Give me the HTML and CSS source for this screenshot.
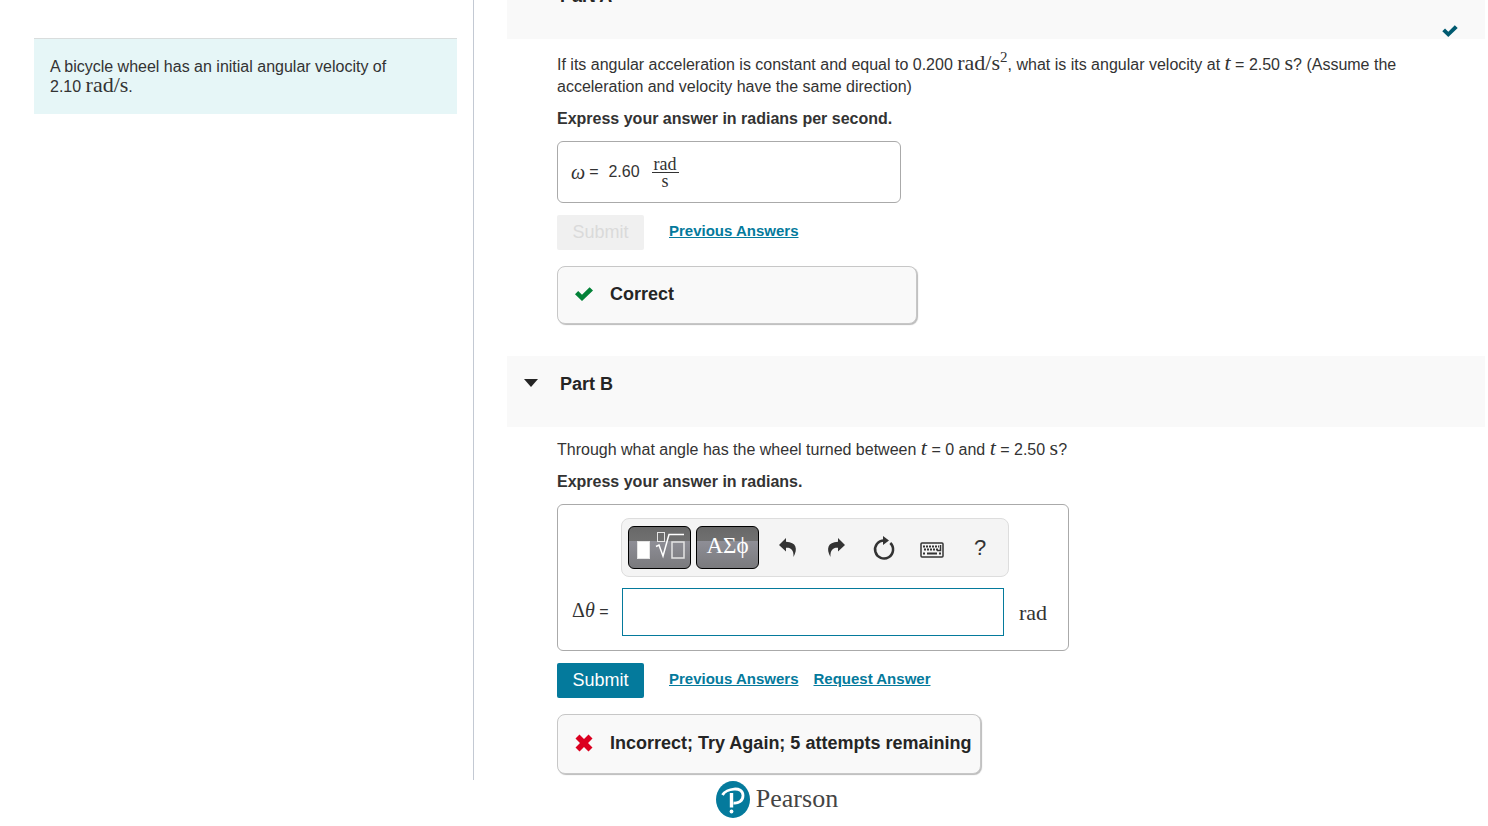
FILE: index.html
```html
<!DOCTYPE html>
<html lang="en">
<head>
    <meta charset="UTF-8">
    <meta name="viewport" content="width=device-width, initial-scale=1.0">
    <title>Angular velocity</title>
    <link rel="stylesheet" href="styles.css">
</head>
<body>
    <div class="columns">
        <aside class="intro">
            <p class="intro-text">A bicycle wheel has an initial angular velocity of 2.10&nbsp;<span class="math">rad/s</span>.</p>
        </aside>

        <main class="parts">
            <section class="part">
                <header class="part-header part-header-first">
                    <h2>Part A</h2>
                    <svg class="done" viewBox="0 0 18 14"><path d="M3.2 4 L7 7.8 L14.6 .3 L18 3.600 L7 14 L0 7.200 Z"/></svg>
                </header>
                <div class="part-body">
                    <p>If its angular acceleration is constant and equal to 0.200 <span class="math">rad/s<sup>2</sup></span>, what is its angular velocity at <i class="math">t</i> = 2.50 <span class="math">s</span>? (Assume the acceleration and velocity have the same direction)</p>
                    <p class="instructions">Express your answer in radians per second.</p>
                    <div class="answer answer-done">
                        <i class="math">ω</i>
                        <span>=</span>
                        <span class="value">2.60</span>
                        <span class="fraction"><span>rad</span><span>s</span></span>
                    </div>
                    <div class="actions">
                        <button class="submit" disabled>Submit</button>
                        <a href="#">Previous Answers</a>
                    </div>
                    <div class="feedback feedback-correct">
                        <svg class="icon-correct" viewBox="0 0 18 14"><path d="M3.2 4 L7 7.8 L14.6 .3 L18 3.600 L7 14 L0 7.200 Z"/></svg>
                        <span>Correct</span>
                    </div>
                </div>
            </section>

            <section class="part">
                <header class="part-header">
                    <svg class="caret" viewBox="0 0 14 8"><path d="M0 0 H14 L7 8 Z"/></svg>
                    <h2>Part B</h2>
                </header>
                <div class="part-body">
                    <p>Through what angle has the wheel turned between <i class="math">t</i> = 0 and <i class="math">t</i> = 2.50 <span class="math">s</span>?</p>
                    <p class="instructions">Express your answer in radians.</p>
                    <div class="answer answer-editor">
                        <div class="toolbar">
                            <button class="palette" aria-label="Templates">
                                <svg width="50" height="30" viewBox="0 0 50 30" fill="none" stroke="#e4e4e4">
                                    <rect x="2.5" y="10.5" width="12" height="17" fill="#fff"/>
                                    <rect x="22.5" y="1.5" width="7" height="9"/>
                                    <path d="M21 15.5 L24 14 L28 25 L34 3.5 H49" stroke="#fff" stroke-width="1.5"/>
                                    <rect x="37" y="11" width="12" height="16" stroke-width="1.5"/>
                                </svg>
                            </button>
                            <button class="palette" aria-label="Symbols">ΑΣϕ</button>
                            <button class="tool" aria-label="Undo">
                                <svg width="20" height="22" viewBox="0 0 20 22"><path d="M8 1 L1 8 L8 14.5 V10.8 C13 10.5 16 13 15.5 20 C20 12 18.5 5 8 4.7 Z"/></svg>
                            </button>
                            <button class="tool" aria-label="Redo">
                                <svg width="20" height="22" viewBox="0 0 20 22"><path d="M12 1 L19 8 L12 14.5 V10.8 C7 10.5 4 13 4.5 20 C0 12 1.5 5 12 4.7 Z"/></svg>
                            </button>
                            <button class="tool" aria-label="Reset">
                                <svg width="24" height="26" viewBox="0 0 24 26"><path d="M18.3 8 A9 9 0 1 1 12 5.5" fill="none" stroke="#333" stroke-width="2.5"/><path d="M11 1 L17 5.5 L11 10 Z"/></svg>
                            </button>
                            <button class="tool" aria-label="Keyboard">
                                <svg class="keyboard" width="24" height="16" viewBox="0 0 24 16" fill="none" stroke="#333">
                                    <rect x="1" y="1" width="22" height="14" rx="1" stroke-width="1.5"/>
                                    <path d="M3 4.5 H19 M4 7.5 H18" stroke-width="2" stroke-dasharray="2 1"/>
                                    <path d="M3 11.5 H5 M7 11.5 H17 M19 11.5 H21" stroke-width="2"/>
                                    <path d="M20.5 3 V8.5 H17" stroke-width="1.5"/>
                                </svg>
                            </button>
                            <button class="tool" aria-label="Help">?</button>
                        </div>
                        <div class="entry">
                            <label for="theta"><span class="math">Δ<i>θ</i></span> =</label>
                            <input type="text" id="theta">
                            <span class="math">rad</span>
                        </div>
                    </div>
                    <div class="actions">
                        <button class="submit">Submit</button>
                        <a href="#">Previous Answers</a>
                        <a href="#">Request Answer</a>
                    </div>
                    <div class="feedback feedback-incorrect">
                        <svg class="icon-incorrect" viewBox="0 0 18 18"><path d="M4.5 .5 L9 5 L13.5 .5 L17.500 4.5 L13 9 L17.500 13.5 L13.5 17.500 L9 13 L4.5 17.500 L.5 13.5 L5 9 L.5 4.5 Z"/></svg>
                        <span>Incorrect; Try Again; 5 attempts remaining</span>
                    </div>
                </div>
            </section>
        </main>
    </div>

    <footer class="footer">
        <svg class="logo" viewBox="0 0 34 37">
            <ellipse cx="17" cy="18.5" rx="17" ry="18.5" fill="#047a9c"/>
            <path d="M6.500 14 C10 7.500 27 4.500 27 14.500 C27 20.500 22 22.500 17.500 22" fill="none" stroke="#fff" stroke-width="2.8"/>
            <path d="M15.5 12 V26.5" stroke="#fff" stroke-width="3.4"/>
            <circle cx="15.5" cy="30.5" r="1.9" fill="#fff"/>
        </svg>
        <span>Pearson</span>
    </footer>
</body>
</html>
```
FILE: styles.css
```css
* {
    margin: 0;
    padding: 0;
    box-sizing: border-box;
}

body {
    height: 100vh;
    overflow: hidden;
    display: flex;
    flex-direction: column;
    background: white;
    color: #333;
    font-family: 'Liberation Sans', Arial, sans-serif;
    font-size: 16px;
    line-height: 22px;
}

button,
input {
    font: inherit;
}

.columns {
    flex: 1;
    min-height: 0;
    display: flex;
}

/* Left column */

.intro {
    flex: 0 0 474px;
    padding: 38px 16px 0 34px;
    border-right: 1px solid #c3c9d3;
}

.intro-text {
    padding: 18px 16px 17px;
    background: #e6f6f7;
    border-top: 1px solid #d9dddd;
    line-height: 20px;
}

.math {
    font-family: 'Liberation Serif', 'Times New Roman', serif;
    font-size: 22px;
    line-height: 1px;
}

.math sup {
    font-size: 15px;
    line-height: 13px;
}

/* Parts */

.parts {
    flex: 1;
    padding: 0 3px 0 33px;
}

.part-header {
    height: 71px;
    padding: 17px 17px 0;
    display: flex;
    align-items: flex-start;
    background: #f9f9f9;
    color: #252525;
}

/* the pane is scrolled past the top of the first part */
.part-header-first {
    margin-top: -32px;
    padding-left: 53px;
    justify-content: space-between;
}

.part-header h2 {
    font-size: 18px;
    font-weight: bold;
}

.caret {
    width: 14px;
    height: 8px;
    margin: 6px 22px 0 0;
    fill: #252525;
}

.done {
    width: 16px;
    height: 12px;
    margin: 40px 10px 0 0;
    fill: #005a70;
}

.part-body {
    padding: 12px 50px 32px;
}

.instructions {
    margin: 10px 0 11px;
    font-weight: bold;
}

.answer {
    border: 1px solid #aaa;
    border-radius: 6px;
}

.answer-done {
    width: 344px;
    height: 62px;
    padding: 0 13px;
    display: flex;
    align-items: center;
    gap: 4px;
}

.answer-done .math {
    font-size: 20px;
}

.value {
    margin: 0 8px 0 6px;
}

.fraction {
    display: flex;
    flex-direction: column;
    text-align: center;
    font-family: 'Liberation Serif', 'Times New Roman', serif;
    font-size: 18px;
    line-height: 16px;
}

.fraction span:first-child {
    padding: 0 2px;
    border-bottom: 1px solid #333;
}

.actions {
    display: flex;
    align-items: center;
    gap: 15px;
    margin: 12px 0 16px;
}

.actions a {
    padding-bottom: 4px;
    color: #047a9c;
    font-size: 15px;
    font-weight: bold;
}

.submit {
    width: 87px;
    height: 35px;
    margin-right: 10px;
    padding-bottom: 2px;
    border: none;
    border-radius: 2px;
    background: #047a9c;
    color: white;
    font-size: 18px;
    cursor: pointer;
}

.submit:disabled {
    background: #f0f0f0;
    color: #dadada;
    cursor: default;
}

.feedback {
    width: fit-content;
    padding: 0 9px 2px 17px;
    display: flex;
    align-items: center;
    gap: 17px;
    background: #f9f9f9;
    border: 1px solid #c7c7c7;
    border-radius: 8px;
    box-shadow: 1px 1px 1px #bbb;
    color: #252525;
    font-size: 18px;
    font-weight: bold;
}

.feedback-correct {
    width: 360px;
    height: 58px;
}

.feedback-incorrect {
    height: 60px;
}

.icon-correct {
    width: 18px;
    height: 14px;
    fill: #038238;
}

.icon-incorrect {
    width: 18px;
    height: 18px;
    fill: #db0020;
}

/* Answer editor */

.answer-editor {
    width: 512px;
    padding: 13px 14px 14px;
}

.toolbar {
    width: 388px;
    height: 59px;
    margin-left: 49px;
    padding: 0 4px 0 6px;
    display: flex;
    align-items: center;
    background: #f4f4f4;
    border: 1px solid #ddd;
    border-radius: 8px;
}

.palette {
    width: 63px;
    height: 43px;
    margin-right: 5px;
    padding-bottom: 3px;
    display: flex;
    align-items: center;
    justify-content: center;
    border: 1px solid #000;
    border-radius: 6px;
    background: linear-gradient(#686868, #707070 34%, #8e8e96 35%, #7a7a7d);
    color: white;
    font-family: 'Liberation Serif', 'Times New Roman', serif;
    font-size: 23px;
}

.tool {
    flex: 1;
    height: 43px;
    display: flex;
    align-items: center;
    justify-content: center;
    border: none;
    background: none;
    color: #333;
    font-size: 22px;
}

.tool svg {
    fill: #333;
}

.tool .keyboard {
    fill: none;
    margin-top: 4px;
}

.entry {
    display: flex;
    align-items: center;
    margin-top: 11px;
}

.entry label {
    width: 50px;
}

.entry label .math {
    font-size: 20px;
}

.entry input {
    width: 382px;
    height: 48px;
    margin-right: 15px;
    padding: 0 8px;
    border: 1px solid #047a9c;
}

/* Footer */

.footer {
    height: 46px;
    padding-left: 66px;
    padding-bottom: 8px;
    display: flex;
    align-items: center;
    justify-content: center;
    gap: 6px;
    font-family: 'Liberation Serif', 'Times New Roman', serif;
    font-size: 26px;
    color: #444;
}

.logo {
    width: 34px;
    height: 37px;
}
```
